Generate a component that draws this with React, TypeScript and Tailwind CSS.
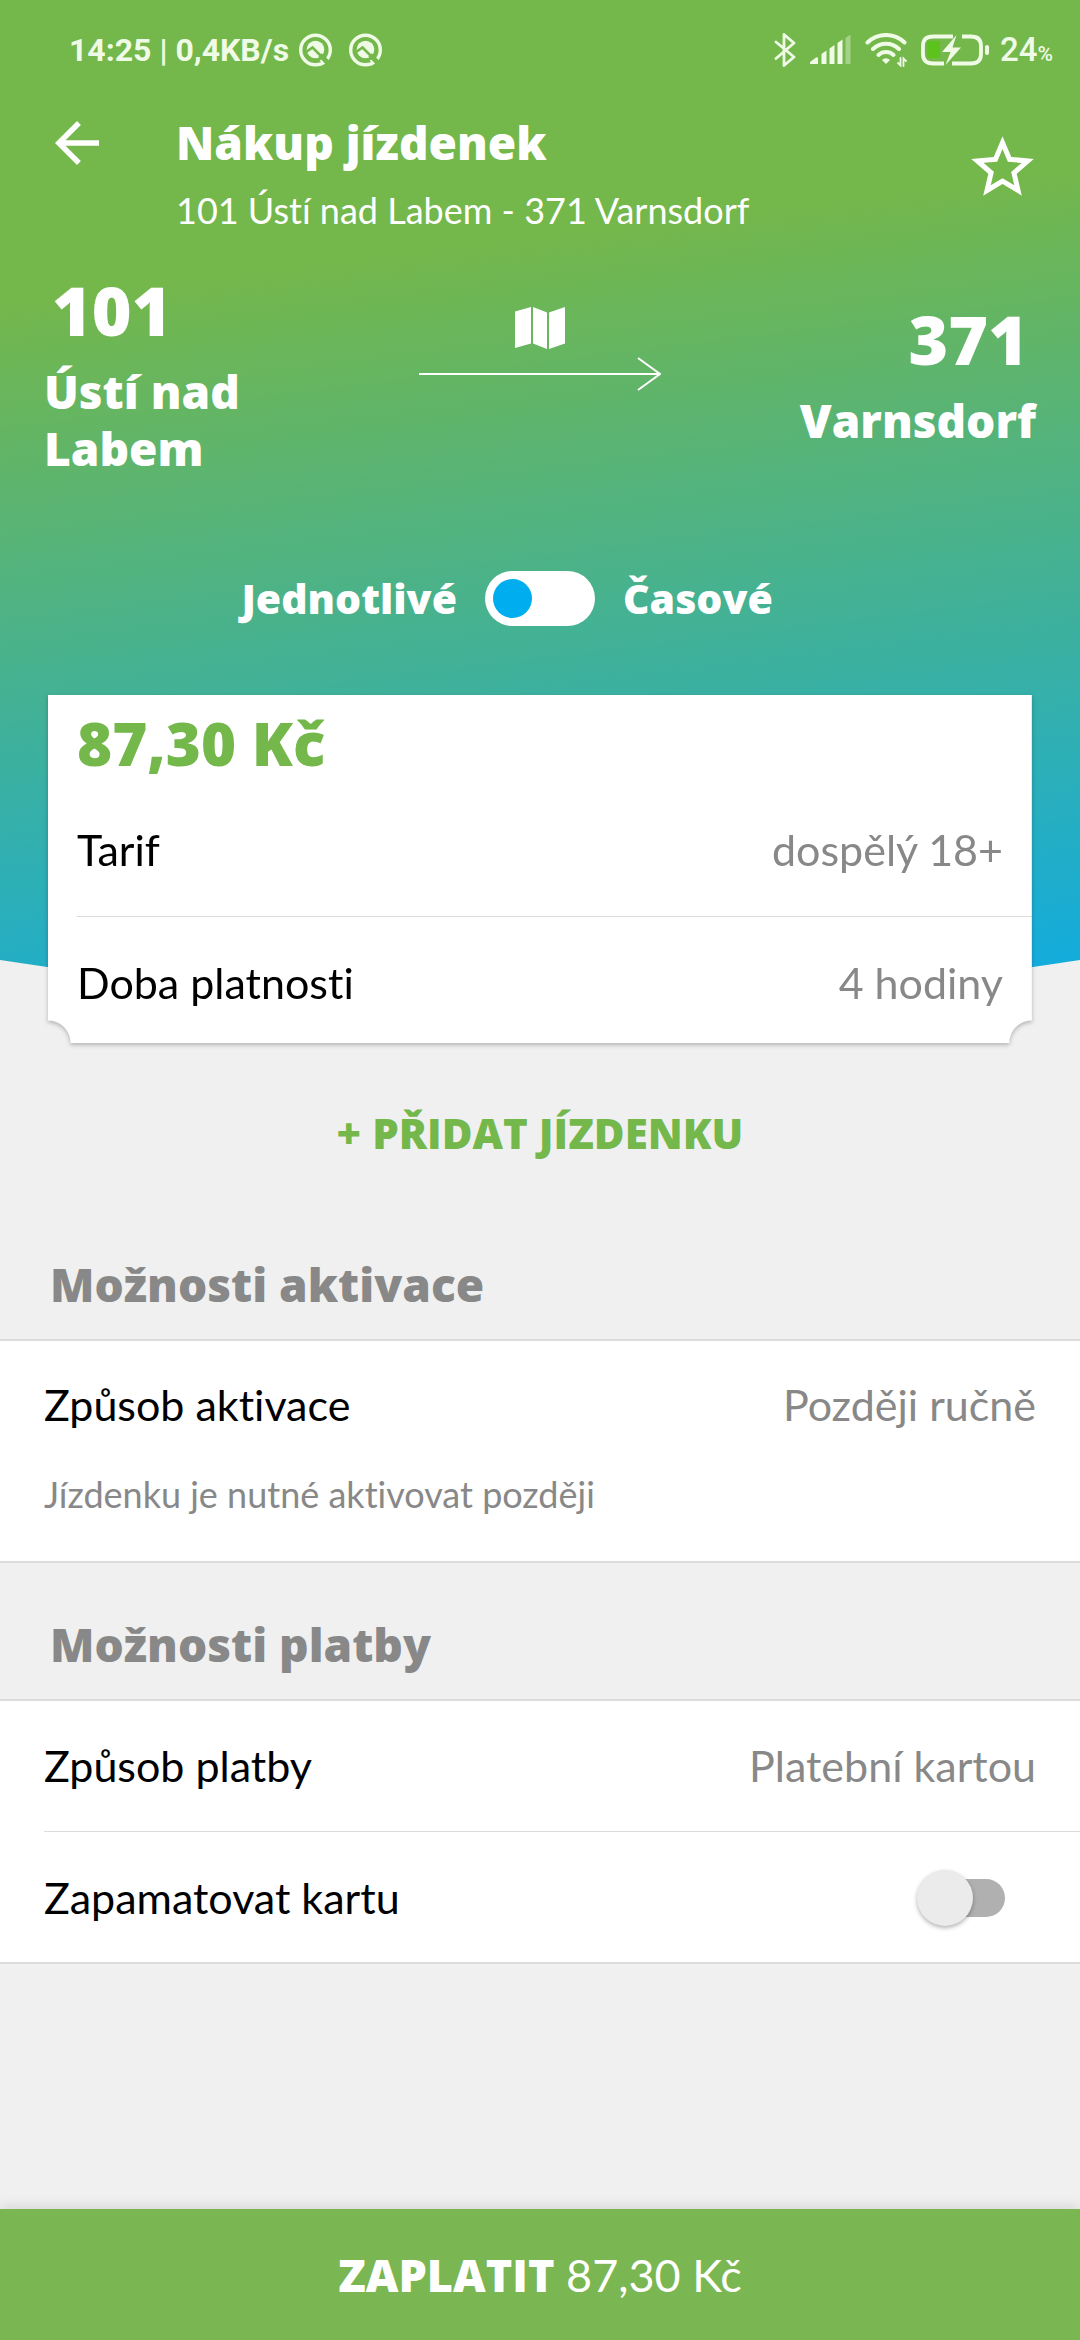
import { useState } from "react";

function MiuiCircleIcon() {
  return (
    <svg viewBox="0 0 34 34" className="size-[34px]" fill="none" aria-hidden="true">
      <circle cx="16.5" cy="17" r="14.8" stroke="currentColor" strokeWidth="3.4" />
      <circle cx="16.5" cy="16.5" r="8.8" fill="currentColor" />
      <path d="M6.500 19.500 13.500 14.500 22 23" stroke="#74b74b" strokeWidth="2.600" />
      <path d="M21 22 31 32" stroke="#74b74b" strokeWidth="5" />
      <path d="M23.500 29.500 21.500 27" stroke="currentColor" strokeWidth="2" />
    </svg>
  );
}

function BluetoothIcon() {
  return (
    <svg viewBox="0 0 22 34" className="h-[34px] w-[22px]" fill="none" stroke="currentColor" strokeWidth="2.800" strokeLinejoin="round" strokeLinecap="round" aria-hidden="true">
      <path d="M2 9 20 24 10 32.500V1.500L20 10 2 25.500" />
    </svg>
  );
}

function SignalIcon() {
  return (
    <svg viewBox="0 0 41 30" className="h-[30px] w-[41px]" fill="currentColor" aria-hidden="true">
      <path d="M0 29v-2l6-4.500q2-1 2 1V29zM11.500 29V19l5-3.500V29zM19.500 29V13.500l5-3.500V29zM27.500 29V8l5-3.500V29z" />
      <path d="M35.500 29V3l5-3.500V29z" opacity=".4" />
    </svg>
  );
}

function WifiIcon() {
  return (
    <svg viewBox="0 0 42 34" className="h-[34px] w-[42px]" fill="none" stroke="currentColor" strokeWidth="4" strokeLinecap="round" aria-hidden="true">
      <path d="M2.500 9.500a26.500 26.500 0 0 1 37 0M8 16a18.500 18.500 0 0 1 26 0M13.500 22a11 11 0 0 1 15 0" />
      <path d="M17 27a5.500 5.500 0 0 1 8 0L21 31z" fill="currentColor" stroke="none" />
      <path d="M35.500 25v7.500l-2.500-2.500M38.500 33v-7.500l2.500 2.500" strokeWidth="1.800" />
    </svg>
  );
}

function BatteryIcon() {
  return (
    <svg viewBox="0 0 69 32" className="h-[32px] w-[69px]" aria-hidden="true">
      <rect x="6" y="7" width="13" height="17" rx="2" fill="#5cc21c" />
      <path d="M32 2.500H12Q2 2.500 2 12v8q0 9.500 10 9.500h11M31 29.500h19q10 0 10-9.500v-8q0-9.500-10-9.500h-9" fill="none" stroke="currentColor" strokeWidth="3.800" />
      <path d="M35.500 1 21 18h8.500L24.500 31 40 13.500h-8.500z" fill="currentColor" />
      <rect x="64" y="11" width="4" height="10" rx="2" fill="currentColor" />
    </svg>
  );
}

function BackIcon() {
  return (
    <svg viewBox="0 0 24 24" className="size-[66px]" fill="currentColor" aria-hidden="true">
      <path d="M20 11H7.830l5.590-5.590L12 4l-8 8 8 8 1.410-1.410L7.830 13H20v-2z" />
    </svg>
  );
}

function StarIcon() {
  return (
    <svg viewBox="0 0 24 24" className="size-[75px]" fill="currentColor" aria-hidden="true">
      <path d="M22 9.240l-7.190-.62L12 2 9.190 8.630 2 9.240l5.460 4.730L5.820 21 12 17.270 18.180 21l-1.630-7.030L22 9.240zM12 15.400l-3.760 2.270 1-4.280-3.320-2.880 4.380-.38L12 6.100l1.710 4.040 4.380.38-3.320 2.880 1 4.280L12 15.400z" />
    </svg>
  );
}

function MapIcon() {
  return (
    <svg viewBox="0 0 50 42" className="h-[42px] w-[50px]" fill="currentColor" aria-hidden="true">
      <path d="M0 4.500 16 0v36.500L0 41zM18 0l14 5.500V42l-14-5.500zM34 5.500 50 0v36.500L34 42z" />
    </svg>
  );
}

function RouteArrow() {
  return (
    <svg viewBox="0 0 242 34" className="h-[34px] w-[242px]" fill="none" stroke="currentColor" strokeWidth="2" aria-hidden="true">
      <path d="M0 17H241M219 1 241 17 219 33" />
    </svg>
  );
}

function Row({ label, value }: { label: string; value: string }) {
  return (
    <button type="button" className="flex w-full items-center justify-between text-left text-[43px] leading-[60px]">
      <span className="text-black">{label}</span>
      <span className="text-[#888888]">{value}</span>
    </button>
  );
}

function SectionTitle({ children }: { children: string }) {
  return (
    <h2 className="pt-[51px] pb-[25px] pl-[50px] font-['Open_Sans',sans-serif] text-[46px] leading-[60px] font-extrabold text-[#888888]">
      {children}
    </h2>
  );
}

function Station({ code, name, align }: { code: string; name: string; align: string }) {
  return (
    <div className={align}>
      <div className="px-2 text-[68px] leading-[80px]">{code}</div>
      <div className="mt-[13px] text-[46px] leading-[57px]">{name}</div>
    </div>
  );
}

export default function App() {
  const [period, setPeriod] = useState(false);
  const [remember, setRemember] = useState(false);

  return (
    <div className="flex min-h-screen flex-col bg-[#f0f0f0] font-['Lato',sans-serif] [font-variant-ligatures:none]">
      <header className="bg-[linear-gradient(173deg,#74b74b_300px,#14acdc_1085px)] pb-[414px] text-white [clip-path:polygon(0_0,100%_0,100%_calc(100%-80px),50%_100%,0_calc(100%-80px))]">
        <div className="flex h-[100px] items-center justify-between pr-[27px] pl-[69px] font-['Roboto',sans-serif] text-[33px] font-bold text-[#effbe6]">
          <div className="flex items-center gap-[10px]">
            <span className="text-[32px]">14:25 | 0,4KB/s</span>
            <MiuiCircleIcon />
            <span className="pl-[6px]">
              <MiuiCircleIcon />
            </span>
          </div>
          <div className="flex items-center gap-[14px]">
            <BluetoothIcon />
            <SignalIcon />
            <WifiIcon />
            <BatteryIcon />
            <span className="-ml-1 font-medium">
              24<span className="text-[21px]">%</span>
            </span>
          </div>
        </div>

        <div className="flex h-[136px] items-start pr-10 pl-11">
          <button type="button" aria-label="Zpět" className="mt-[10px]">
            <BackIcon />
          </button>
          <div className="mt-3 flex-1 pl-[66px]">
            <h1 className="font-['Open_Sans',sans-serif] text-[46px] leading-[60px] font-extrabold">Nákup jízdenek</h1>
            <p className="mt-3 text-[36px] leading-[52px]">101 Ústí nad Labem - 371 Varnsdorf</p>
          </div>
          <button type="button" aria-label="Přidat k oblíbeným" className="mt-[30px]">
            <StarIcon />
          </button>
        </div>

        <div className="mt-[34px] grid grid-cols-3 items-center px-11 font-['Open_Sans',sans-serif] font-extrabold">
          <Station code="101" name="Ústí nad Labem" align="max-w-[300px] text-left" />
          <div className="flex flex-col items-center gap-2 pb-[50px]">
            <MapIcon />
            <RouteArrow />
          </div>
          <Station code="371" name="Varnsdorf" align="text-right" />
        </div>

        <div className="mt-[94px] grid grid-cols-[1fr_auto_1fr] items-center gap-[28px] font-['Open_Sans',sans-serif] text-[41px] leading-[55px] font-extrabold">
          <label htmlFor="period" className="text-right">
            Jednotlivé
          </label>
          <input
            id="period"
            type="checkbox"
            role="switch"
            checked={period}
            onChange={(e) => setPeriod(e.target.checked)}
            className="flex h-[55px] w-[110px] appearance-none items-center rounded-full bg-white px-2 before:size-[39px] before:rounded-full before:bg-[#00aeef] checked:justify-end"
          />
          <label htmlFor="period">Časové</label>
        </div>
      </header>

      <main>
        <div className="mx-12 -mt-[345px] [filter:drop-shadow(0_2px_2px_rgba(0,0,0,0.25))]">
          <section className="bg-white pt-[13px] [mask:radial-gradient(circle_at_0_100%,#0000_22px,#000_23px)_left/51%_100%_no-repeat,radial-gradient(circle_at_100%_100%,#0000_22px,#000_23px)_right/51%_100%_no-repeat]">
            <p className="pb-[6px] pl-[29px] font-['Open_Sans',sans-serif] text-[60px] leading-[70px] font-extrabold text-[#74b74b]">87,30 Kč</p>
            <div className="ml-[29px] border-b border-[#dcdcdc] pt-9 pr-[29px] pb-9">
              <Row label="Tarif" value="dospělý 18+" />
            </div>
            <div className="pt-9 pr-[29px] pb-[30px] pl-[29px]">
              <Row label="Doba platnosti" value="4 hodiny" />
            </div>
          </section>
        </div>

        <button type="button" className="mt-[30px] mb-[10px] block h-[120px] w-full font-['Open_Sans',sans-serif] text-[42px] leading-[60px] font-extrabold text-[#74b74b]">
          + PŘIDAT JÍZDENKU
        </button>

        <SectionTitle>Možnosti aktivace</SectionTitle>
        <section className="border-y-2 border-[#dcdcdc] bg-white px-11 pt-[34px] pb-[42px]">
          <Row label="Způsob aktivace" value="Později ručně" />
          <p className="mt-[34px] text-[36px] leading-[50px] text-[#888888]">Jízdenku je nutné aktivovat později</p>
        </section>

        <SectionTitle>Možnosti platby</SectionTitle>
        <section className="border-y-2 border-[#dcdcdc] bg-white">
          <div className="ml-11 border-b border-[#dcdcdc] pt-[35px] pr-11 pb-[35px]">
            <Row label="Způsob platby" value="Platební kartou" />
          </div>
          <div className="flex items-center justify-between pt-9 pr-[75px] pb-[34px] pl-11 text-[43px] leading-[60px]">
            <label htmlFor="remember">Zapamatovat kartu</label>
            <input
              id="remember"
              type="checkbox"
              role="switch"
              checked={remember}
              onChange={(e) => setRemember(e.target.checked)}
              className="flex h-[38px] w-[84px] appearance-none items-center rounded-full bg-[#b0b0b0] before:-ml-1 before:size-[56px] before:rounded-full before:bg-[#ebebeb] before:shadow-[0_2px_4px_rgba(0,0,0,0.3)] checked:justify-end checked:bg-[#b5dc9c]"
            />
          </div>
        </section>
      </main>

      <button
        type="button"
        className="mt-auto h-[131px] w-full bg-[#7ab651] text-[45px] leading-[60px] text-white shadow-[0_-2px_12px_rgba(0,0,0,0.12)]"
      >
        <span className="font-['Open_Sans',sans-serif] font-extrabold">ZAPLATIT</span> 87,30 Kč
      </button>
    </div>
  );
}
